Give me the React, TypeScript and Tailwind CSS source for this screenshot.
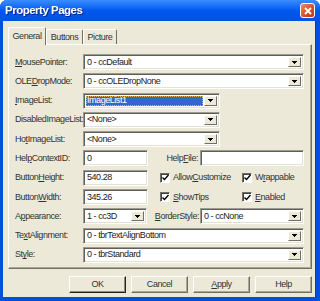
import React from "react";

const FONT = { fontFamily: '"Liberation Sans", Arial, sans-serif' };

// text with one underlined mnemonic letter
function Mn({ text, u }: { text: string; u?: number }) {
  if (u === undefined) return <>{text}</>;
  return (
    <>
      {text.slice(0, u)}
      <span className="underline underline-offset-[1px]">{text[u]}</span>
      {text.slice(u + 1)}
    </>
  );
}

function Arrow() {
  return (
    <svg width="5" height="3" viewBox="0 0 5 3" shapeRendering="crispEdges">
      <rect x="0" y="0" width="5" height="1" fill="#000" />
      <rect x="1" y="1" width="3" height="1" fill="#000" />
      <rect x="2" y="2" width="1" height="1" fill="#000" />
    </svg>
  );
}

const sunken =
  "border border-t-[#9d9b90] border-l-[#9d9b90] border-b-white border-r-white shadow-[inset_1px_1px_0_#5f5e58,inset_-1px_-1px_0_#e4e1d3] bg-white";

function Combo({ value, w, selected }: { value: string; w: string; selected?: boolean }) {
  return (
    <div className={`${w} h-[16px] flex p-[2px] ${sunken}`}>
      <div className="flex-1 flex items-center min-w-0 pr-[1px]">
        {selected ? (
          <div className="w-full h-full flex items-center bg-[#316ac5] text-white pl-[1px] outline-1 outline-dotted outline-[#e6b35a] -outline-offset-1">
            {value}
          </div>
        ) : (
          <span className="pl-[1px] text-[#222] whitespace-nowrap">{value}</span>
        )}
      </div>
      <div className="w-[13px] h-full flex items-center justify-center bg-[#ece9d8] border border-t-white border-l-white border-b-[#716f64] border-r-[#716f64]">
        <Arrow />
      </div>
    </div>
  );
}

function TextBox({ value, w }: { value: string; w: string }) {
  return (
    <div className={`${w} h-[16px] flex items-center pl-[3px] text-[#222] ${sunken}`}>{value}</div>
  );
}

function Check({ label, u }: { label: string; u: number }) {
  return (
    <div className="flex items-center gap-[3px]">
      <div className="w-[10px] h-[10px] bg-white border border-t-[#716f64] border-l-[#716f64] border-b-white border-r-white shadow-[inset_1px_1px_0_#404040] flex items-center justify-center">
        <svg width="7" height="7" viewBox="0 0 7 7">
          <path d="M0.5 3.5 L2.5 5.5 L6.5 1" stroke="#000" strokeWidth="1.4" fill="none" />
        </svg>
      </div>
      <span className="text-[#333]">
        <Mn text={label} u={u} />
      </span>
    </div>
  );
}

function Label({ text, u }: { text: string; u?: number }) {
  return (
    <div className="w-[68px] shrink-0 text-[#333] whitespace-nowrap">
      <Mn text={text} u={u} />
    </div>
  );
}

function Row({ children }: { children: React.ReactNode }) {
  return <div className="flex items-center h-[16px]">{children}</div>;
}

function Button({ label, u, def }: { label: string; u?: number; def?: boolean }) {
  return (
    <div
      className={`w-[57px] h-[17px] flex items-center justify-center text-[#333] bg-[#ece9d8] border ${
        def
          ? "border-t-white border-l-white border-b-[#222] border-r-[#222] shadow-[inset_-1px_-1px_0_#8d8b80]"
          : "border-t-white border-l-white border-b-[#716f64] border-r-[#716f64] shadow-[inset_-1px_-1px_0_#aca899]"
      }`}
    >
      <Mn text={label} u={u} />
    </div>
  );
}

function Tab({ label, active }: { label: string; active?: boolean }) {
  return (
    <div
      className={`flex items-center justify-center bg-[#ece9d8] text-[#333] border-l border-t border-r border-l-white border-t-white border-r-[#716f64] rounded-t-[2px] ${
        active ? "h-[18px] -mb-[1px] relative z-10 px-[4px]" : "h-[15px] px-[4px]"
      }`}
    >
      {label}
    </div>
  );
}

export default function App() {
  return (
    <div
      className="w-[320px] h-[301px] flex flex-col bg-[#0050dc] rounded-t-[7px] overflow-hidden text-[9px] tracking-[-0.45px] leading-none"
      style={FONT}
    >
      {/* title bar */}
      <div className="h-[21px] shrink-0 flex items-center justify-between pl-[5px] pr-[5px] bg-gradient-to-b from-[#3a8cff] via-[#0058ee] to-[#0052e2]">
        <span className="text-white font-bold text-[11.5px] tracking-[-0.5px] drop-shadow-[1px_1px_0_#0a2a8a]">
          Property Pages
        </span>
        <div className="w-[15px] h-[15px] rounded-[3px] border border-white bg-gradient-to-br from-[#e98a6a] via-[#d9542b] to-[#b73810] flex items-center justify-center">
          <svg width="8" height="8" viewBox="0 0 8 8">
            <path d="M1 1 L7 7 M7 1 L1 7" stroke="#fff" strokeWidth="1.8" />
          </svg>
        </div>
      </div>

      {/* body */}
      <div className="flex-1 ml-[3px] mr-[4px] mb-[4px] bg-[#ece9d8] flex flex-col pt-[6px] pl-[5px] pr-[3px] border-r border-r-[#1a3a9a]">
        <div className="flex items-end h-[17px] pr-[2px]">
          <div className="w-[38px] flex flex-col justify-end">
            <Tab label="General" active />
          </div>
          <div className="w-[37px]">
            <Tab label="Buttons" />
          </div>
          <div className="w-[34px]">
            <Tab label="Picture" />
          </div>
        </div>

        {/* tab page */}
        <div className="h-[225px] border border-t-white border-l-white border-b-[#716f64] border-r-[#716f64] shadow-[inset_-1px_-1px_0_#aca899] pl-[6px] pr-[7px] pt-[9px] flex flex-col gap-[3.3px]">
          <Row>
            <Label text="MousePointer:" u={0} />
            <Combo value="0 - ccDefault" w="w-[222px]" />
          </Row>
          <Row>
            <Label text="OLEDropMode:" u={3} />
            <Combo value="0 - ccOLEDropNone" w="w-[222px]" />
          </Row>
          <Row>
            <Label text="ImageList:" u={0} />
            <Combo value="ImageList1" w="w-[137px]" selected />
          </Row>
          <Row>
            <Label text="DisabledImageList:" />
            <Combo value="<None>" w="w-[137px]" />
          </Row>
          <Row>
            <Label text="HotImageList:" u={2} />
            <Combo value="<None>" w="w-[137px]" />
          </Row>
          <Row>
            <Label text="HelpContextID:" u={3} />
            <TextBox value="0" w="w-[65px]" />
            <div className="flex-1 text-right pr-[2px] text-[#333]">
              <Mn text="HelpFile:" u={4} />
            </div>
            <TextBox value="" w="w-[104px]" />
          </Row>
          <Row>
            <Label text="ButtonHeight:" u={6} />
            <TextBox value="540.28" w="w-[65px]" />
            <div className="w-[82px] ml-[12px]">
              <Check label="AllowCustomize" u={5} />
            </div>
            <Check label="Wrappable" u={1} />
          </Row>
          <Row>
            <Label text="ButtonWidth:" u={6} />
            <TextBox value="345.26" w="w-[65px]" />
            <div className="w-[82px] ml-[12px]">
              <Check label="ShowTips" u={0} />
            </div>
            <Check label="Enabled" u={0} />
          </Row>
          <Row>
            <Label text="Appearance:" u={1} />
            <Combo value="1 - cc3D" w="w-[64px]" />
            <div className="flex-1 text-right pr-[1px] text-[#333]">
              <Mn text="BorderStyle:" u={0} />
            </div>
            <Combo value="0 - ccNone" w="w-[104px]" />
          </Row>
          <Row>
            <Label text="TextAlignment:" u={2} />
            <Combo value="0 - tbrTextAlignBottom" w="w-[222px]" />
          </Row>
          <Row>
            <Label text="Style:" u={2} />
            <Combo value="0 - tbrStandard" w="w-[222px]" />
          </Row>
        </div>

        {/* dialog buttons */}
        <div className="flex justify-end gap-[5px] mt-[7px]">
          <Button label="OK" def />
          <Button label="Cancel" />
          <Button label="Apply" u={0} />
          <Button label="Help" />
        </div>
      </div>
    </div>
  );
}
